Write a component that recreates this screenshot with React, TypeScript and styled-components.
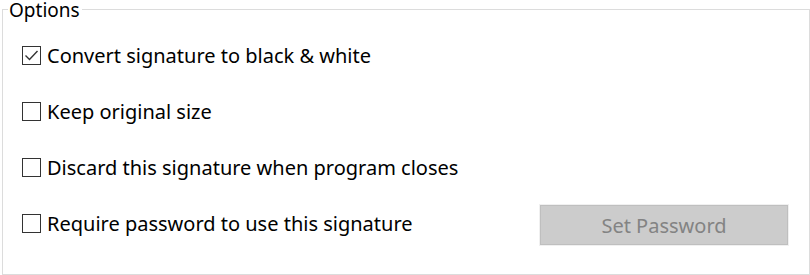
import React from "react";
import styled, { createGlobalStyle } from "styled-components";

const Global = createGlobalStyle`
  html, body {
    margin: 0;
    background: #ffffff;
  }
  body {
    font-family: "Noto Sans", "Open Sans", sans-serif;
  }
`;

const Group = styled.fieldset`
  box-sizing: border-box;
  width: 808px;
  height: 266px;
  margin: 9px 0 0 2px;
  padding: 0 20px 0 19px;
  border: 1px solid #dcdcdc;
  position: relative;
`;

const Legend = styled.legend`
  position: absolute;
  top: -9px;
  left: 5px;
  padding: 0 2px 0 1px;
  background: #ffffff;
  font-size: 19px;
  line-height: 18px;
  color: #000000;
`;

const List = styled.div`
  display: grid;
  grid-auto-rows: 56px;
  padding-top: 17px;
`;

const Row = styled.div`
  display: flex;
  align-items: center;
  justify-content: space-between;
`;

const Label = styled.label`
  display: flex;
  align-items: center;
  gap: 6px;
  font-size: 20px;
  color: #000000;
  cursor: default;
`;

const Box = styled.span`
  box-sizing: border-box;
  width: 19px;
  height: 19px;
  border: 1px solid #333333;
  background: #ffffff;
  display: flex;
  align-items: center;
  justify-content: center;
`;

const Button = styled.button`
  box-sizing: border-box;
  width: 248px;
  height: 40px;
  margin: 4px 1px 0 0;
  border: 1px solid #bfbfbf;
  outline: 1px solid #f0f0f0;
  background: #cccccc;
  color: #838383;
  font-family: "Noto Sans", "Open Sans", sans-serif;
  font-size: 20px;
`;

interface OptionProps {
  text: string;
  checked?: boolean;
}

const Check = () => (
  <svg width="15" height="13" viewBox="0 0 15 13">
    <path d="M1.5 6.5 L5.5 10.5 L13.5 2" fill="none" stroke="#333" strokeWidth="1.4" />
  </svg>
);

const Option: React.FC<OptionProps> = ({ text, checked }) => (
  <Label>
    <Box>{checked && <Check />}</Box>
    {text}
  </Label>
);

export default function App() {
  return (
    <>
      <Global />
      <Group>
        <Legend>Options</Legend>
        <List>
          <Row>
            <Option text="Convert signature to black & white" checked />
          </Row>
          <Row>
            <Option text="Keep original size" />
          </Row>
          <Row>
            <Option text="Discard this signature when program closes" />
          </Row>
          <Row>
            <Option text="Require password to use this signature" />
            <Button disabled>Set Password</Button>
          </Row>
        </List>
      </Group>
    </>
  );
}
